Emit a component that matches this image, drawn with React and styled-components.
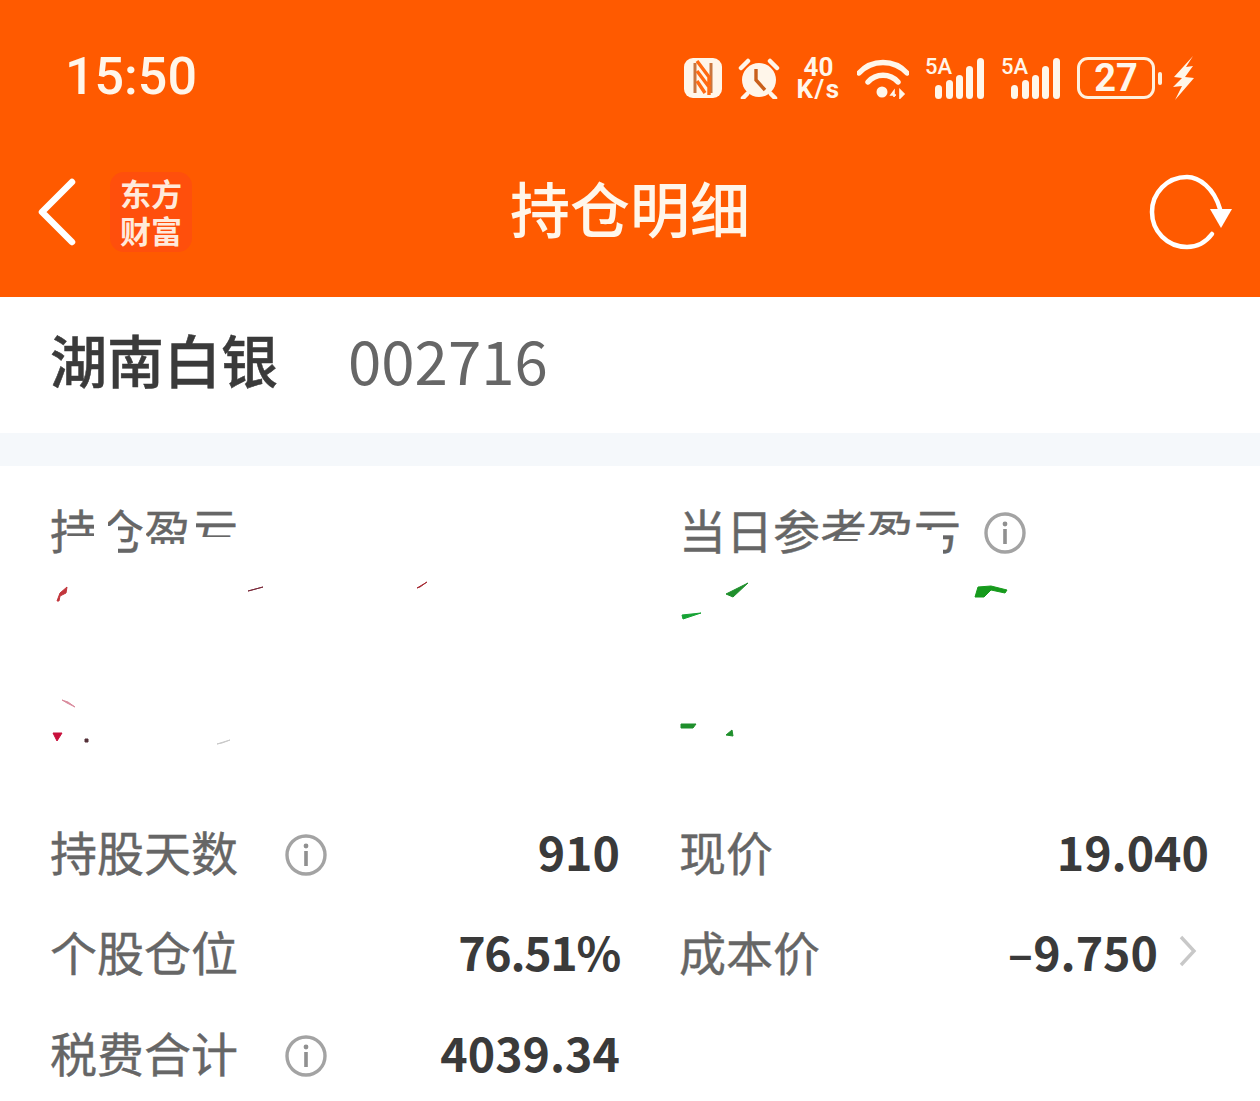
import React from 'react';
import styled, { createGlobalStyle } from 'styled-components';

const CJK = `"Noto Sans CJK SC", "Noto Sans", sans-serif`;

const GlobalStyle = createGlobalStyle`
    html, body {
        margin: 0;
        padding: 0;
        background: #fff;
    }
    * {
        box-sizing: border-box;
    }
`;

function NfcIcon() {
    return (
        <svg width="38" height="40" viewBox="0 0 38 40">
            <rect x="0" y="0" width="38" height="40" rx="9" fill="#fff6ea" />
            <path d="M11 5v30M27 5v30" stroke="#c9763f" strokeWidth="3" fill="none" />
            <path d="M13 3l12 16v8M13 13l12 16v8M13 23l8 12" stroke="#ff6a12" strokeWidth="3.4" fill="none" />
        </svg>
    );
}

function AlarmIcon() {
    return (
        <svg width="42" height="41" viewBox="0 0 42 41">
            <circle cx="21" cy="22" r="17" fill="#fff6ea" />
            <path d="M3 10L10 3M39 10L32 3M9 36l-4 4M33 36l4 4" stroke="#fff6ea" strokeWidth="4.5" strokeLinecap="round" />
            <path d="M18 11v11l9 10" stroke="#c9601c" strokeWidth="3.4" fill="none" />
        </svg>
    );
}

function WifiIcon() {
    return (
        <svg width="52" height="41" viewBox="0 0 52 41">
            <path d="M2 15C15 1 37 1 50 15" stroke="#fff6ea" strokeWidth="5.4" fill="none" strokeLinecap="round" />
            <path d="M11 24C19 15 33 15 41 24" stroke="#fff6ea" strokeWidth="5.4" fill="none" strokeLinecap="round" />
            <circle cx="25" cy="34" r="5.5" fill="#fff6ea" />
            <path d="M37 39V33l-3 4h5M43 32v8l4-4z" stroke="#fff6ea" strokeWidth="1.6" fill="#fff6ea" />
        </svg>
    );
}

function Bars() {
    return (
        <svg width="50" height="41" viewBox="0 0 50 41">
            <rect x="0" y="27" width="7" height="14" rx="3.5" fill="#fff6ea" />
            <rect x="11" y="22" width="7" height="19" rx="3.5" fill="#fff6ea" />
            <rect x="21" y="17" width="7" height="24" rx="3.5" fill="#fff6ea" />
            <rect x="31" y="8" width="7" height="33" rx="3.5" fill="#fff6ea" />
            <rect x="42" y="0" width="7" height="41" rx="3.5" fill="#fff6ea" />
        </svg>
    );
}

function BoltIcon() {
    return (
        <svg width="22" height="44" viewBox="0 0 22 44">
            <path d="M21 0L2 21l8 1-9 9 9-1-7 14 19-22-9-1 8-11-7 1z" fill="#fff6ea" />
        </svg>
    );
}

function RefreshIcon() {
    return (
        <svg width="84" height="78" viewBox="0 0 84 78">
            <path d="M71 36C65 15 50 4 38 4C18 4 3 20 3 39C3 58 18 74 38 74C48 74 57 69 63 61" stroke="#fff" strokeWidth="4.5" fill="none" strokeLinecap="round" />
            <path d="M61 36H83L72 55z" fill="#fff" />
        </svg>
    );
}

function InfoIcon() {
    return (
        <svg width="42" height="42" viewBox="0 0 42 42">
            <circle cx="21" cy="21" r="19" stroke="#a3a3a3" strokeWidth="3.4" fill="none" />
            <circle cx="21" cy="12" r="2.4" fill="#909090" />
            <rect x="19.2" y="17" width="3.6" height="15" fill="#909090" />
        </svg>
    );
}

// leftovers of the figures, drawn in page coordinates
const leftMarks = [
    { points: '57,601 60,593 67,587 66,593 60,596 59,601', fill: '#c2363c' },
    { points: '248,591 263,587 252,590', fill: '#7a2a3a' },
    { points: '417,588 427,582 420,587', fill: '#a62c34' },
    { points: '62,700 68,702 75,707 67,703', fill: '#d98a9c' },
    { points: '53,733 62,733 57,741', fill: '#c8103c' },
    { points: '85,739 88,739 88,742 85,742', fill: '#553038' },
    { points: '217,744 230,740 222,743', fill: '#c9c9c9' },
];

const rightMarks = [
    { points: '728,594 750,583 735,597', fill: '#1f8f2c' },
    { points: '684,615 703,613 685,619', fill: '#16a335' },
    { points: '977,597 980,587 993,586 1009,590 1007,593 993,590 986,597', fill: '#169a1c' },
    { points: '683,724 698,724 695,728 683,728', fill: '#1f8f2c' },
    { points: '728,735 734,730 735,736', fill: '#1f8f2c' },
];

const leftCut = `path("M0 0H16V62H0Z M16 0H44V38H16Z M58 0H94V62H68V28H58Z M96 0H140V46H96Z M146 0H190V39H146Z")`;
const rightCut = `path("M0 0H140V62H0Z M140 0H188V43H140Z M188 0H232V37H188Z M232 0H282V32H232Z M264 32H282V62H264Z")`;

function Marks({ items, x }) {
    return (
        <MarkLayer viewBox={`${x} 570 580 180`} width="580" height="180">
            {items.map((m) => <polygon key={m.points} points={m.points} fill={m.fill} stroke={m.fill} />)}
        </MarkLayer>
    );
}

function Row({ label, value, info, arrow, tight }) {
    return (
        <Cell>
            <CellLabel>
                {label}
                {info && <CellInfo><InfoIcon /></CellInfo>}
            </CellLabel>
            <CellValue $tight={tight}>{value}</CellValue>
            {arrow && <Chevron viewBox="0 0 20 34" width="20" height="34"><path d="M3 3l13 14L3 31" /></Chevron>}
        </Cell>
    );
}

function App() {
    return (
        <Page>
            <GlobalStyle />
            <Header>
                <StatusBar>
                    <Clock>15:50</Clock>
                    <StatusIcons>
                        <NfcIcon />
                        <AlarmIcon />
                        <Speed><SpeedLine>40</SpeedLine><SpeedLine $wide>K/s</SpeedLine></Speed>
                        <WifiIcon />
                        <Signal><SignalTag>5A</SignalTag><Bars /></Signal>
                        <Signal><SignalTag>5A</SignalTag><Bars /></Signal>
                        <Battery>
                            <BatteryBody>27</BatteryBody>
                            <BatteryNub />
                            <BoltIcon />
                        </Battery>
                    </StatusIcons>
                </StatusBar>
                <NavBar>
                    <NavLeft>
                        <svg width="42" height="68" viewBox="0 0 42 68">
                            <path d="M36 4L6 34l30 30" stroke="#fff" strokeWidth="6.5" fill="none" strokeLinecap="round" strokeLinejoin="round" />
                        </svg>
                        <Logo><LogoLine>东方</LogoLine><LogoLine>财富</LogoLine></Logo>
                    </NavLeft>
                    <Title>持仓明细</Title>
                    <RefreshIcon />
                </NavBar>
            </Header>
            <StockRow>
                <StockName>湖南白银</StockName>
                <StockCode>002716</StockCode>
            </StockRow>
            <Divider />
            <Summary>
                <SummaryCol>
                    <SummaryLabel $cut={leftCut}>持仓盈亏</SummaryLabel>
                    <Marks items={leftMarks} x={50} />
                </SummaryCol>
                <SummaryCol>
                    <LabelLine>
                        <SummaryLabel $cut={rightCut}>当日参考盈亏</SummaryLabel>
                        <LabelInfo><InfoIcon /></LabelInfo>
                    </LabelLine>
                    <Marks items={rightMarks} x={681} />
                </SummaryCol>
            </Summary>
            <Details>
                <Row label="持股天数" value="910" info />
                <Row label="现价" value="19.040" />
                <Row label="个股仓位" value="76.51%" tight />
                <Row label="成本价" value="–9.750" arrow />
                <Row label="税费合计" value="4039.34" info />
            </Details>
        </Page>
    );
}

const Page = styled.div`
    width: 1260px;
    height: 1101px;
    overflow: hidden;
    background: #fff;
    font-family: ${CJK};
`;
const Header = styled.header`
    height: 297px;
    background: #ff5a00;
`;
const StatusBar = styled.div`
    height: 150px;
    padding: 0 66px 0 65px;
    display: flex;
    align-items: center;
    justify-content: space-between;
`;
const Clock = styled.div`
    font-family: "Roboto", sans-serif;
    font-size: 52px;
    font-weight: 500;
    color: #fff6ea;
    margin-top: 2px;
`;
const StatusIcons = styled.div`
    display: flex;
    align-items: center;
    gap: 16px;
    margin-top: 6px;
`;
const Speed = styled.div`
    width: 45px;
    height: 44px;
    display: flex;
    flex-direction: column;
    align-items: center;
    font-family: "Roboto", sans-serif;
    font-weight: 700;
    color: #fff6ea;
`;
const SpeedLine = styled.span`
    display: block;
    height: 22px;
    font-size: 26px;
    line-height: 22px;
    letter-spacing: ${(p) => (p.$wide ? '1.5px' : '0')};
`;
const Signal = styled.div`
    width: 60px;
    height: 41px;
    display: flex;
    justify-content: flex-end;
    position: relative;
`;
const SignalTag = styled.span`
    position: absolute;
    left: 0;
    top: -3px;
    font-family: "Roboto", sans-serif;
    font-size: 22px;
    font-weight: 500;
    line-height: 24px;
    color: #fff6ea;
`;
const Battery = styled.div`
    display: flex;
    align-items: center;
`;
const BatteryBody = styled.div`
    width: 78px;
    height: 42px;
    border: 3px solid #fff0dc;
    border-radius: 11px;
    display: flex;
    align-items: center;
    justify-content: center;
    font-family: "Roboto", sans-serif;
    font-size: 38px;
    font-weight: 700;
    color: #fff6ea;
`;
const BatteryNub = styled.div`
    width: 4px;
    height: 13px;
    margin: 0 10px 0 3px;
    border-radius: 2px;
    background: #fff0dc;
`;
const NavBar = styled.div`
    height: 147px;
    padding: 0 27px 24px 36px;
    display: flex;
    align-items: center;
    justify-content: space-between;
    position: relative;
`;
const NavLeft = styled.div`
    display: flex;
    align-items: center;
    gap: 32px;
`;
const Logo = styled.div`
    width: 82px;
    height: 80px;
    padding-top: 2px;
    border-radius: 14px;
    background: #ff4f0c;
    color: #ffeadb;
    font-size: 31px;
    font-weight: 700;
    text-align: center;
`;
const LogoLine = styled.span`
    display: block;
    height: 37px;
    line-height: 37px;
`;
const Title = styled.h1`
    position: absolute;
    left: 0;
    right: 0;
    top: 17px;
    margin: 0;
    text-align: center;
    font-size: 60px;
    font-weight: 500;
    line-height: 80px;
    color: #fff6ea;
`;
const StockRow = styled.div`
    height: 136px;
    padding: 0 0 14px 50px;
    display: flex;
    align-items: center;
    gap: 70px;
`;
const StockName = styled.div`
    font-size: 57px;
    font-weight: 500;
    color: #3a3a3a;
    -webkit-text-stroke: 0.5px #3a3a3a;
`;
const StockCode = styled.div`
    font-size: 60px;
    color: #666;
`;
const Divider = styled.div`
    height: 33px;
    background: #f5f8fb;
`;
const Summary = styled.section`
    height: 334px;
    padding: 32px 50px 0;
    display: grid;
    grid-template-columns: 629px 1fr;
`;
const SummaryCol = styled.div`
    min-width: 0;
`;
const LabelLine = styled.div`
    display: flex;
    align-items: center;
    gap: 23px;
    height: 62px;
`;
const LabelInfo = styled.span`
    display: flex;
    margin-top: 8px;
`;
const SummaryLabel = styled.div`
    height: 62px;
    font-size: 47px;
    line-height: 62px;
    color: #666;
    -webkit-text-stroke: 0.4px #666;
    clip-path: ${(p) => p.$cut};
`;
const MarkLayer = styled.svg`
    display: block;
    margin-top: 10px;
`;
const Details = styled.section`
    padding: 0 50px;
    display: grid;
    grid-template-columns: 570px 530px;
    column-gap: 59px;
    grid-auto-rows: 100.5px;
`;
const Cell = styled.div`
    display: flex;
    align-items: center;
`;
const CellLabel = styled.div`
    display: flex;
    align-items: center;
    font-size: 47px;
    color: #666;
    -webkit-text-stroke: 0.4px #666;
`;
const CellInfo = styled.span`
    display: flex;
    margin: 10px 0 0 47px;
`;
const CellValue = styled.div`
    margin-left: auto;
    font-size: 46.5px;
    font-weight: 600;
    color: #3a3a3a;
    letter-spacing: ${(p) => (p.$tight ? '-1.3px' : '0')};
`;
const Chevron = styled.svg`
    margin-left: 20px;
    margin-right: 11px;
    fill: none;
    stroke: #c8c8c8;
    stroke-width: 3.4;
`;

export default App;
